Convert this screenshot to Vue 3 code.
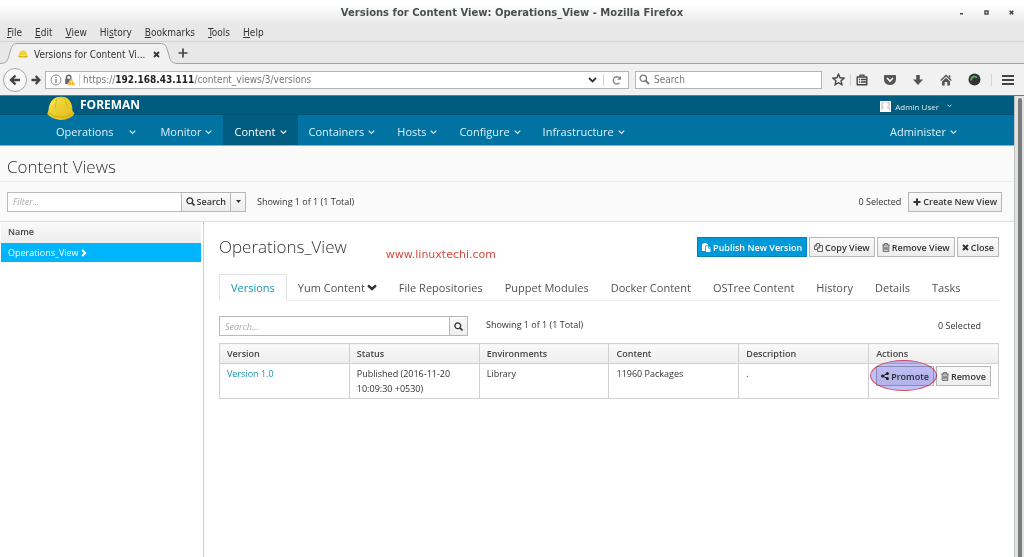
<script setup>
import { ref } from 'vue'

const menus = [
  ['', 'F', 'ile'],
  ['', 'E', 'dit'],
  ['', 'V', 'iew'],
  ['Hi', 's', 'tory'],
  ['', 'B', 'ookmarks'],
  ['', 'T', 'ools'],
  ['', 'H', 'elp'],
]
const navItems = ['Monitor', 'Content', 'Containers', 'Hosts', 'Configure', 'Infrastructure']
const tabs = ['Versions', 'Yum Content', 'File Repositories', 'Puppet Modules', 'Docker Content', 'OSTree Content', 'History', 'Details', 'Tasks']
const columns = ['Version', 'Status', 'Environments', 'Content', 'Description', 'Actions']
const filter = ref('')
const search = ref('')
const webSearch = ref('')
</script>

<template>
  <div class="window">
    <header class="titlebar">
      <span class="window-title">Versions for Content View: Operations_View - Mozilla Firefox</span>
      <div class="window-controls">
        <button aria-label="Minimize"><svg width="5" height="5" viewBox="0 0 5 5"><path d="M1 3h3v1.5H1z" fill="#444" /></svg></button>
        <button aria-label="Maximize"><svg width="5" height="5" viewBox="0 0 5 5"><path d="M1 1h3v3H1z" fill="none" stroke="#444" stroke-width="1.4" /></svg></button>
        <button aria-label="Close window"><svg width="5" height="5" viewBox="0 0 5 5"><path d="M.7.7l3.6 3.6M4.3.7L.7 4.3" stroke="#444" stroke-width="1.6" /></svg></button>
      </div>
    </header>

    <nav class="menubar" aria-label="Application menu">
      <button v-for="m in menus" :key="m[2]">{{ m[0] }}<u>{{ m[1] }}</u>{{ m[2] }}</button>
    </nav>

    <div class="tabstrip">
      <svg class="tab-end" width="18" height="22" viewBox="0 0 18 22"><path d="M0 22V21.500C8 21.500 8 17 10 10C12 3 13 1.500 18 1.500V22z" fill="#f1f1f2" /><path d="M0 21.500C8 21.500 8 17 10 10C12 3 13 1.500 18 1.500" fill="none" stroke="#a2a2a2" /></svg>
      <div class="browser-tab">
        <svg width="10" height="8" viewBox="0 0 10 8"><path d="M1 5.500C1 2 3 .5 5 .5S9 2 9 5.500z" fill="#f2d326" /><path d="M.3 5.300Q5 7 9.700 5.300V7Q5 8 .3 7z" fill="#d8b012" /></svg>
        <span>Versions for Content Vi...</span>
        <button aria-label="Close tab"><svg width="7" height="7" viewBox="0 0 7 7"><path d="M1 1l5 5M6 1L1 6" stroke="#333" stroke-width="1.8" /></svg></button>
      </div>
      <svg class="tab-end" width="18" height="22" viewBox="0 0 18 22"><path d="M18 22V21.500C10 21.500 10 17 8 10C6 3 5 1.500 0 1.500V22z" fill="#f1f1f2" /><path d="M18 21.500C10 21.500 10 17 8 10C6 3 5 1.500 0 1.500" fill="none" stroke="#a2a2a2" /></svg>
      <div class="strip-rest">
        <button aria-label="New tab"><svg width="10" height="10" viewBox="0 0 10 10"><path d="M5 .5v9M.5 5h9" stroke="#444" stroke-width="1.700" /></svg></button>
      </div>
    </div>

    <div class="toolbar">
      <button class="back" aria-label="Back"><svg width="12" height="12" viewBox="0 0 12 12"><path d="M6.500 1.500L2 6l4.500 4.500M2.500 6H11" fill="none" stroke="#444" stroke-width="2.400" /></svg></button>
      <button class="forward" aria-label="Forward"><svg width="10" height="10" viewBox="0 0 10 10"><path d="M4.700 1L8.500 5L4.700 9M8 5H.5" fill="none" stroke="#444" stroke-width="2.300" /></svg></button>
      <div class="urlbar">
        <svg width="12" height="12" viewBox="0 0 12 12"><circle cx="6" cy="6" r="5" fill="none" stroke="#8b8b8b" /><path d="M6 5v4M6 2.800v1.200" stroke="#777" stroke-width="1.200" /></svg>
        <svg width="12" height="12" viewBox="0 0 12 12"><path d="M2.500 5V3.500a2.200 2.200 0 0 1 4.400 0V5" fill="none" stroke="#666" stroke-width="1.400" /><path d="M1.200 4.700h7V10h-7z" fill="#666" /><path d="M7.200 4.500L11.500 11.300H3z" fill="#fbb117" stroke="#fff" stroke-width=".4" /><path d="M7.200 6.800v2.300M7.200 9.700v.8" stroke="#fff" /></svg>
        <span class="divider tight"></span>
        <span class="url">https://<b>192.168.43.111</b>/content_views/3/versions</span>
        <button aria-label="Show history"><svg width="9" height="6" viewBox="0 0 9 6"><path d="M1 1l3.500 3.500L8 1" fill="none" stroke="#333" stroke-width="1.800" /></svg></button>
        <span class="divider"></span>
        <button class="reload" aria-label="Reload"><svg width="10" height="10" viewBox="0 0 10 10"><path d="M7.500 7.800A3.600 3.600 0 1 1 7.600 3" fill="none" stroke="#888" stroke-width="1.400" /><path d="M9 .8v3.900H5.200z" fill="#888" /></svg></button>
      </div>
      <label class="websearch">
        <svg width="11" height="11" viewBox="0 0 11 11"><circle cx="4.300" cy="4.300" r="3.200" fill="none" stroke="#777" stroke-width="1.300" /><path d="M6.600 6.600L10 10" stroke="#777" stroke-width="1.800" /></svg>
        <input v-model="webSearch" aria-label="Web search" placeholder="Search" />
      </label>
      <div class="tools">
        <button aria-label="Bookmark"><svg width="13" height="13" viewBox="0 0 13 13"><path d="M6.500 1.200l1.600 3.600 3.900.4-2.900 2.600.8 3.900-3.400-2-3.400 2 .8-3.900L1 5.200l3.900-.4z" fill="none" stroke="#444" stroke-width="1.400" /></svg></button>
        <span class="divider"></span>
        <button aria-label="Reading list"><svg width="12" height="12" viewBox="0 0 12 12"><path d="M1.200 3h9.600v7.800H1.200z" fill="none" stroke="#444" stroke-width="1.400" stroke-linejoin="round" /><path d="M4 3V1.200h4V3M3 5.500h1.200M5 5.500h5M3 8h1.200M5 8h5" fill="none" stroke="#444" stroke-width="1.300" /></svg></button>
        <button aria-label="Pocket"><svg width="12" height="12" viewBox="0 0 12 12"><path d="M1 1h10q1 0 1 1v3.500a6 5.500 0 0 1-12 0V2q0-1 1-1z" fill="#555" /><path d="M3 4l3 3 3-3" fill="none" stroke="#fff" stroke-width="1.600" /></svg></button>
        <button aria-label="Downloads"><svg width="12" height="12" viewBox="0 0 12 12"><path d="M4.200 1h3.600v4.500H11L6 11 1 5.500h3.200z" fill="#555" /></svg></button>
        <button aria-label="Home"><svg width="12" height="12" viewBox="0 0 12 12"><path d="M.7 6.500L6 1.400l5.300 5.100" fill="none" stroke="#555" stroke-width="1.400" /><path d="M8.800 1.200h1.500v3L8.800 3z" fill="#555" /><path d="M6 3.700l4 3.800V11.500H7.300V8H4.700v3.500H2V7.500z" fill="#555" /></svg></button>
        <button aria-label="Extension"><svg width="13" height="13" viewBox="0 0 13 13"><circle cx="6.500" cy="6.500" r="6" fill="#333" /><path d="M3.300 7.500A3.300 3.300 0 0 1 6.500 3.500" fill="none" stroke="#59b747" stroke-width="1.800" /><path d="M6.500 3.500A3.300 3.300 0 0 1 9 4.800" fill="none" stroke="#57b9b5" stroke-width="1.600" /></svg></button>
        <span class="divider wide"></span>
        <button aria-label="Menu"><svg width="12" height="12" viewBox="0 0 12 12"><path d="M0 2h12M0 6h12M0 10h12" stroke="#444" stroke-width="2" /></svg></button>
      </div>
    </div>

    <div class="viewport">
      <div class="page">
        <div class="brandbar">
          <a href="#" class="brand">
            <svg width="28" height="25" viewBox="0 0 28 25"><defs><linearGradient id="helmet" x1="0" y1="0" x2="1" y2="1"><stop offset="0" stop-color="#fae34a" /><stop offset="1" stop-color="#dcb912" /></linearGradient></defs><path d="M1.500 14C2 7 5.500 2 11 1q5-1 9 1c4 3 5.500 7.500 5.500 13l2 2.500q-1 2.500-5 4.500-5 2.500-10 2Q4 22.500 .3 18z" fill="url(#helmet)" /><path d="M1.300 17q6 4.200 13 4.200 7 0 11.500-4.500" fill="none" stroke="#c9a514" stroke-width=".9" /><path d="M11 2.500q3-2 7 0l2.500 10M9.500 3L8 13" fill="none" stroke="#d6b41c" stroke-width=".9" /><path d="M5 9q1-3 3-4" stroke="#fff5a8" fill="none" /></svg>
            <span>FOREMAN</span>
          </a>
          <button class="user">
            <svg width="11" height="11" viewBox="0 0 11 11"><path d="M0 0h11v11H0z" fill="#d9d9d9" /><path d="M1.500 11q0-3 2.500-3.700V6Q3 5 3 3.500 3.500 1.500 5.500 1.500T8 3.500Q8 5 7 6v1.300q2.500.7 2.500 3.700z" fill="#fff" /><path d="M.5.500h10v10H.5z" fill="none" stroke="#fff" /></svg>
            <span>Admin User</span>
            <svg class="caret" width="5" height="4" viewBox="0 0 7 5"><path d="M.7.7l2.800 2.800L6.300.7" fill="none" stroke="currentColor" stroke-width="1.300" /></svg>
          </button>
        </div>

        <nav class="mainnav" aria-label="Main">
          <button class="org">Operations<svg width="7" height="5" viewBox="0 0 7 5"><path d="M.7.7l2.800 2.800L6.300.7" fill="none" stroke="currentColor" stroke-width="1.200" /></svg></button>
          <button v-for="n in navItems" :key="n" :class="{ active: n === 'Content' }">{{ n }}<svg width="7" height="5" viewBox="0 0 7 5"><path d="M.7.7l2.800 2.800L6.300.7" fill="none" stroke="currentColor" stroke-width="1.200" /></svg></button>
          <button class="administer">Administer<svg width="7" height="5" viewBox="0 0 7 5"><path d="M.7.7l2.800 2.800L6.300.7" fill="none" stroke="currentColor" stroke-width="1.200" /></svg></button>
        </nav>

        <h1>Content Views</h1>

        <div class="filterbar">
          <div class="group filter">
            <input v-model="filter" aria-label="Filter" placeholder="Filter..." />
            <button class="btn"><svg width="9" height="9" viewBox="0 0 9 9"><circle cx="3.800" cy="3.800" r="2.900" fill="none" stroke="#333" stroke-width="1.300" /><path d="M5.900 5.900L8.500 8.500" stroke="#333" stroke-width="1.600" /></svg>Search</button>
            <button class="btn drop" aria-label="Search options"><svg width="5" height="3" viewBox="0 0 5 3"><path d="M0 0h5L2.500 3z" fill="#333" /></svg></button>
          </div>
          <span>Showing 1 of 1 (1 Total)</span>
          <span class="selected">0 Selected</span>
          <button class="btn"><svg width="8" height="8" viewBox="0 0 8 8"><path d="M4 .5v7M.5 4h7" stroke="#333" stroke-width="2" /></svg>Create New View</button>
        </div>

        <div class="split">
          <aside>
            <div class="list-head">Name</div>
            <a href="#" class="list-row">Operations_View<svg width="6" height="8" viewBox="0 0 6 8"><path d="M1.200 1l3 3-3 3" fill="none" stroke="#fff" stroke-width="2" /></svg></a>
          </aside>

          <main>
            <div class="detail-head">
              <h2>Operations_View</h2>
              <span class="watermark">www.linuxtechi.com</span>
              <div class="actions">
                <button class="btn primary"><svg width="9" height="9" viewBox="0 0 9 9"><path d="M0 1h1.500V0h3v1H6v1.500H3.200v5.500H0z" fill="#fff" /><path d="M4 3.300h2.200v2.200H8.500V9H4zM6.900 3.300l1.700 1.600H6.900z" fill="#fff" /></svg>Publish New Version</button>
                <button class="btn"><svg width="9" height="9" viewBox="0 0 9 9"><path d="M3.500 6.500H.5V3L2.800.5H5.500V2.500M.5 3H2.800V.5M8.500 2.500v6H3.500V5L5.800 2.500zM3.500 5H5.800V2.500" fill="none" stroke="#444" stroke-width=".8" /></svg>Copy View</button>
                <button class="btn"><svg width="8" height="9" viewBox="0 0 8 9"><path d="M.3 2h7.400M2.500 1.800V.6h3v1.200M1.200 2v6.400h5.600V2M2.800 3.500v3.700M4 3.500v3.700M5.200 3.500v3.700" fill="none" stroke="#444" stroke-width=".8" /></svg>Remove View</button>
                <button class="btn"><svg width="7" height="7" viewBox="0 0 7 7"><path d="M1 1l5 5M6 1L1 6" stroke="#333" stroke-width="2" /></svg>Close</button>
              </div>
            </div>

            <div class="tabs" role="tablist">
              <button v-for="t in tabs" :key="t" role="tab" :aria-selected="t === 'Versions'" :class="{ active: t === 'Versions' }">{{ t }}<svg v-if="t === 'Yum Content'" width="10" height="7" viewBox="0 0 10 7"><path d="M1 1.300l4 3.700 4-3.700" fill="none" stroke="#333" stroke-width="2.400" /></svg></button>
            </div>

            <div class="searchbar">
              <div class="group">
                <input v-model="search" aria-label="Search versions" placeholder="Search..." />
                <button class="btn icon" aria-label="Search"><svg width="9" height="9" viewBox="0 0 9 9"><circle cx="3.800" cy="3.800" r="2.900" fill="none" stroke="#333" stroke-width="1.300" /><path d="M5.900 5.900L8.500 8.500" stroke="#333" stroke-width="1.600" /></svg></button>
              </div>
              <span>Showing 1 of 1 (1 Total)</span>
              <span class="selected">0 Selected</span>
            </div>

            <table>
              <thead>
                <tr><th v-for="c in columns" :key="c" scope="col">{{ c }}</th></tr>
              </thead>
              <tbody>
                <tr>
                  <td><a href="#">Version 1.0</a></td>
                  <td>Published (2016-11-20 10:09:30 +0530)</td>
                  <td>Library</td>
                  <td>11960 Packages</td>
                  <td>.</td>
                  <td class="row-actions">
                    <div>
                      <span class="marked">
                        <button class="btn"><svg width="8" height="8" viewBox="0 0 8 8"><path d="M6.500 1.500L1.500 4l5 2.500" fill="none" stroke="#222" /><circle cx="6.400" cy="1.600" r="1.500" fill="#222" /><circle cx="1.600" cy="4" r="1.500" fill="#222" /><circle cx="6.400" cy="6.400" r="1.500" fill="#222" /></svg>Promote</button>
                        <span class="ellipse"></span>
                      </span>
                      <button class="btn"><svg width="8" height="9" viewBox="0 0 8 9"><path d="M.3 2h7.400M2.500 1.800V.6h3v1.200M1.200 2v6.400h5.600V2M2.800 3.500v3.700M4 3.500v3.700M5.200 3.500v3.700" fill="none" stroke="#444" stroke-width=".8" /></svg>Remove</button>
                    </div>
                  </td>
                </tr>
              </tbody>
            </table>
          </main>
        </div>
      </div>
      <div class="scrollbar"><div class="thumb"></div></div>
    </div>
  </div>
</template>

<style>
body { margin: 0; }
</style>

<style scoped>
.window, .window * { box-sizing: border-box; }
.window {
  display: flex;
  flex-direction: column;
  min-height: 100vh;
  background: #fff;
  color: #333;
  font-family: "Open Sans", "Noto Sans", sans-serif;
  font-size: 9px;
}
button, input { font: inherit; color: inherit; padding: 0; margin: 0; border: 0; background: none; border-radius: 0; outline: 0; }
button { white-space: nowrap; }
svg { display: block; flex: none; }
a { text-decoration: none; }

.titlebar {
  display: flex;
  align-items: center;
  justify-content: center;
  position: relative;
  height: 24px;
  background: linear-gradient(#fff 20%, #e8e8e8);
  font: bold 10px "DejaVu Sans", sans-serif;
  color: #4a4f50;
}
.window-controls { position: absolute; right: 10px; top: 10px; display: flex; gap: 20px; }

.menubar, .tabstrip, .toolbar { font-family: "DejaVu Sans Condensed", "DejaVu Sans", sans-serif; font-size: 10px; }
.menubar {
  display: flex;
  align-items: center;
  gap: 13px;
  height: 18px;
  padding-left: 7px;
  background: #e8e8e8;
  border-bottom: 1px solid #d3d3d3;
}
.tabstrip { display: flex; height: 22px; background: #e8e8e8; }
.browser-tab {
  display: flex;
  align-items: center;
  width: 142px;
  margin-top: 1px;
  background: #f1f1f2;
  border-top: 1px solid #a2a2a2;
}
.browser-tab span { flex: 1; margin-left: 6px; white-space: nowrap; }
.strip-rest { flex: 1; display: flex; align-items: center; border-bottom: 1px solid #a2a2a2; }

.toolbar {
  display: flex;
  align-items: center;
  height: 31px;
  padding: 0 10px 0 3px;
  background: #f1f1f2;
  color: #777;
}
.back {
  display: grid;
  place-items: center;
  width: 24px;
  height: 24px;
  border: 1px solid #a5a5a5;
  border-radius: 50%;
  background: #f8f8f8;
}
.forward { width: 18px; padding-left: 4px; }
.urlbar {
  display: flex;
  align-items: center;
  gap: 2px;
  flex: 1;
  height: 18px;
  padding-left: 4px;
  border: 1px solid #b4b4b4;
  background: #fff;
}
.url { flex: 1; white-space: nowrap; }
.url b { color: #222; }
.divider { width: 1px; height: 12px; margin: 0 4px; background: #d5d5d5; }
.urlbar .tight { margin: 0 1px; }
.reload { margin: 0 6px 0 2px; }
.websearch {
  display: flex;
  align-items: center;
  gap: 4px;
  width: 187px;
  height: 18px;
  margin: 0 10px 0 6px;
  padding-left: 3px;
  border: 1px solid #b4b4b4;
  background: #fff;
}
.websearch input { flex: 1; min-width: 0; }
.websearch input::placeholder { color: #777; opacity: 1; }
.tools { display: flex; align-items: center; gap: 16px; }
.tools .divider { margin: 0 -11px; }
.tools .wide { margin: 0 -6px; }

.viewport { flex: 1; display: flex; border-top: 1px solid #777; }
.page { flex: 1; display: flex; flex-direction: column; min-width: 0; }
.scrollbar { width: 10px; padding: 2px 2px 0 3px; background: #e2e2e2; border-left: 1px solid #c2c2c2; display: flex; }
.thumb { flex: 1; background: #797c7c; border-radius: 3px 3px 0 0; }

.brandbar {
  display: flex;
  justify-content: space-between;
  height: 19px;
  padding: 0 62px 0 47px;
  background: #005c7f;
  border-bottom: 1px solid #005172;
}
.brand { display: flex; gap: 5px; color: #fff; font-size: 12px; font-weight: 700; line-height: 17px; z-index: 1; }
.user { display: flex; align-items: center; gap: 4px; padding-top: 2px; color: #d8ebf3; font-size: 8px; }
.caret { margin-left: 4px; }

.mainnav {
  display: flex;
  height: 31px;
  background: #0073a3;
  padding: 0 46px;
  border-bottom: 1px solid #72bdd8;
  color: #dcf0f8;
  font-size: 11px;
}
.mainnav button { display: flex; align-items: center; gap: 4px; padding: 2px 11px 0; }
.mainnav svg { margin-top: 2px; }
.mainnav .org { gap: 16px; padding-left: 10px; padding-right: 13px; }
.mainnav .active { background: #005c81; color: #fff; }
.mainnav .administer { margin-left: auto; }

h1, h2 { margin: 0; font-weight: 300; color: #333; font-size: 17px; }
h1 { padding: 0 7px; line-height: 41px; height: 36px; background: #fafafa; border-bottom: 1px solid #ececec; }
.filterbar {
  display: flex;
  align-items: center;
  height: 40px;
  padding: 0 12px 0 7px;
  background: #fafafa;
  border-bottom: 1px solid #dedede;
}
.group { display: flex; height: 20px; margin-right: 11px; }
.group input {
  flex: 1;
  min-width: 0;
  padding: 0 5px;
  border: 1px solid #bababa;
  background: #fff;
}
.group input::placeholder { color: #aaa; font-style: italic; opacity: 1; }
.filter { width: 239px; }
.group .btn { margin-left: -1px; padding: 0 4px; }
.group .drop { width: 16px; justify-content: center; }
.btn {
  display: inline-flex;
  align-items: center;
  gap: 2px;
  height: 20px;
  padding: 0 4px;
  border: 1px solid #b7b7b7;
  background: linear-gradient(#fafafa, #ededed);
  color: #333;
  font-size: 9px;
  font-weight: 600;
}
.selected { margin-left: auto; margin-right: 7px; }

.split { flex: 1; display: flex; }
aside { width: 204px; padding: 0 2px 0 1px; border-right: 1px solid #d1d1d1; }
.list-head {
  height: 21px;
  padding: 0 7px;
  line-height: 19px;
  font-weight: 600;
  background: linear-gradient(#fafafa, #ededed);
  color: #444;
}
.list-row {
  display: flex;
  align-items: center;
  gap: 2px;
  height: 19px;
  padding: 0 7px;
  background: #00b5fd;
  color: #fff;
}
main { flex: 1; min-width: 0; padding: 15px 15px 0; }
.detail-head { display: flex; height: 37px; }
h2 { line-height: 20px; }
.watermark { margin: 10px 0 0 39px; font: 11px/16px "DejaVu Sans", sans-serif; color: #d9483b; }
.actions { display: flex; gap: 2px; margin-left: auto; }
.primary { background: #0099da; border-color: #0080b8; color: #fff; }

.tabs { display: flex; height: 27px; border-bottom: 1px solid #ececec; font-size: 11px; color: #4d5258; }
.tabs button { display: flex; align-items: center; gap: 2px; padding: 0 11px; border: 0; }
.tabs .active { height: 27px; border: 1px solid #e2e2e2; border-bottom-color: #fff; color: #1593b4; }

.searchbar { display: flex; height: 27px; margin-top: 15px; line-height: 17px; }
.searchbar .group { width: 249px; margin-right: 18px; }
.searchbar .icon { width: 19px; justify-content: center; }
.searchbar .selected { margin-right: 18px; line-height: 20px; }

table { width: 100%; table-layout: fixed; border-collapse: collapse; }
th, td { border: 1px solid #d1d1d1; text-align: left; vertical-align: top; padding: 2px 7px; line-height: 15px; }
th { background: linear-gradient(#fafafa, #ededed); color: #444; font-weight: 600; }
td a { color: #1593a9; }
.row-actions > div { display: flex; gap: 2px; }
.marked { position: relative; display: flex; }
.ellipse {
  position: absolute;
  inset: -6px -3px -5px -6px;
  border: 1px solid #d5526d;
  border-radius: 50%;
  background: #c1c1fa;
  mix-blend-mode: multiply;
  pointer-events: none;
}
</style>
